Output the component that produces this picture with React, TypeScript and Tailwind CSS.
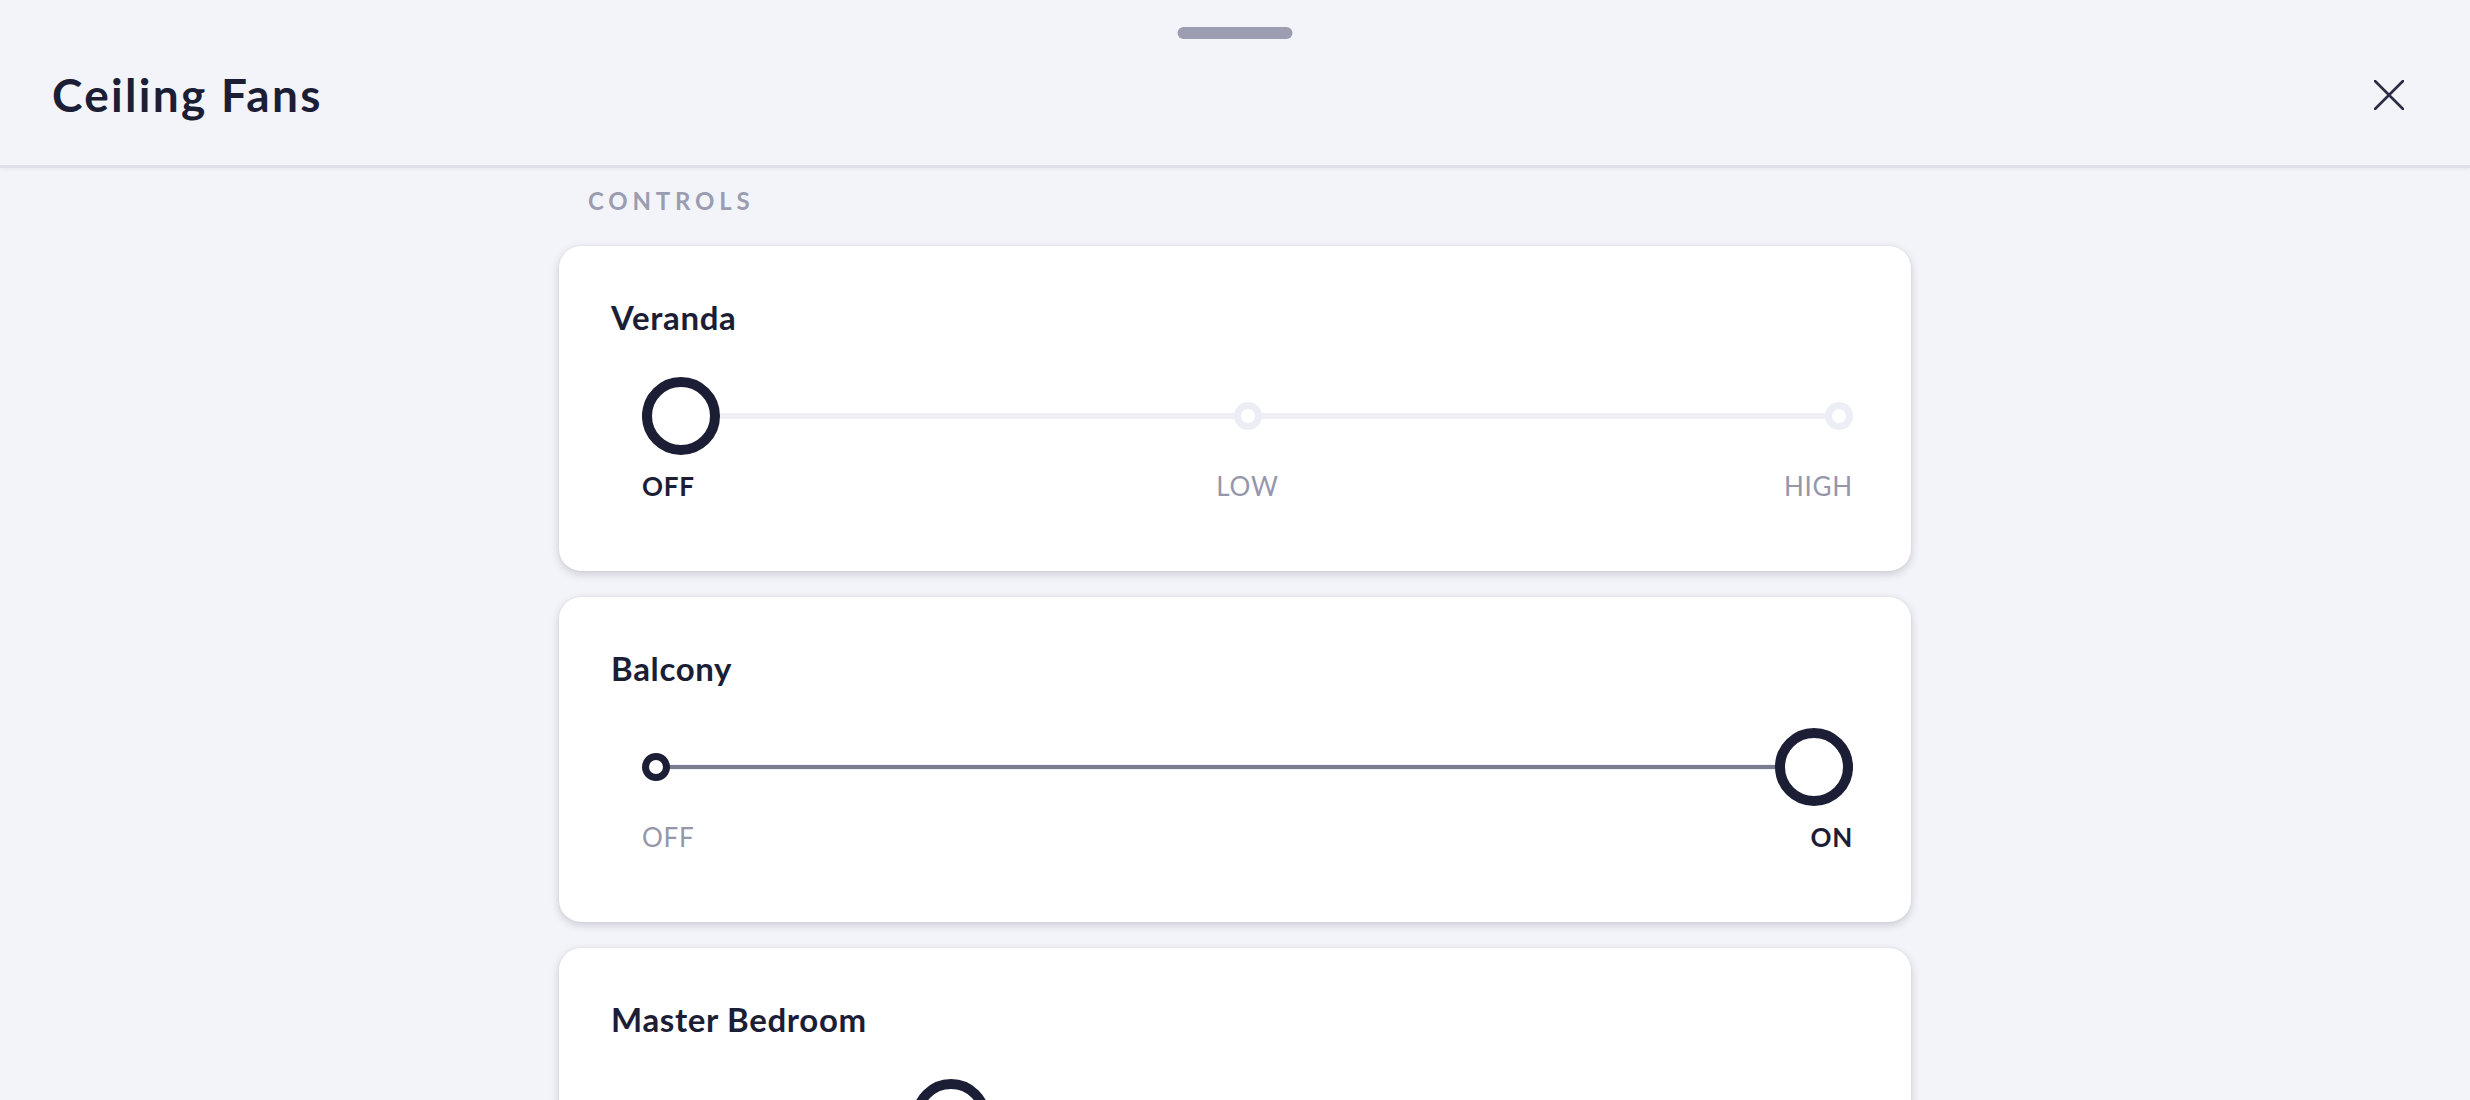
import React from "react";

type Fan = { name: string; stops: string[]; value: number; pos?: number };

const fans: Fan[] = [
  { name: "Veranda", stops: ["OFF", "LOW", "HIGH"], value: 0 },
  { name: "Balcony", stops: ["OFF", "ON"], value: 1 },
  { name: "Master Bedroom", stops: ["OFF", "LOW", "MED", "HIGH", "MAX"], value: 1, pos: 0.238 },
];

function StepSlider({ stops, value, pos }: { stops: string[]; value: number; pos?: number }) {
  const n = stops.length;
  const frac = pos ?? value / (n - 1);
  return (
    <div className="ml-[31px] mr-[6px]">
      <div className="relative flex h-[78px] items-center justify-between">
        {/* inactive track */}
        <div className="absolute left-[13px] right-[13px] top-1/2 h-[6px] -translate-y-1/2 rounded-full bg-[#eff0f5]" />
        {/* active track */}
        <div
          className="absolute left-[13px] top-1/2 h-[4px] -translate-y-1/2 bg-[#7a7c90]"
          style={{ width: `calc((100% - 78px) * ${frac} + 26px)` }}
        />
        {stops.map((s, i) => (
          <div
            key={s}
            className={
              "relative h-[28px] w-[28px] rounded-full border-[7px] bg-white " +
              (i <= value ? "border-[#1c1e36]" : "border-[#eceef5]")
            }
          />
        ))}
        <div
          className="absolute top-0 h-[78px] w-[78px] -translate-x-1/2 rounded-full border-[10px] border-[#1c1e36] bg-white"
          style={{ left: `calc(39px + (100% - 78px) * ${frac})` }}
        />
      </div>
      <div
        className={
          "mt-[16px] grid text-[26px] leading-[30px] tracking-[0.03em] " +
          (n === 2 ? "grid-cols-2" : n === 3 ? "grid-cols-3" : "grid-cols-5")
        }
      >
        {stops.map((s, i) => (
          <div
            key={s}
            className={
              (i === 0 ? "text-left " : i === n - 1 ? "text-right " : "text-center ") +
              (i === value ? "font-bold text-[#1c1e36]" : "font-normal text-[#9596ab]")
            }
          >
            {s}
          </div>
        ))}
      </div>
    </div>
  );
}

function FanCard({ fan }: { fan: Fan }) {
  return (
    <div className="rounded-[22px] bg-white pl-[52px] pr-[52px] pt-[51px] pb-[70px] shadow-[0_3px_8px_rgba(30,32,60,0.19),0_0_2px_rgba(30,32,60,0.08)]">
      <div className="text-[33px] font-bold leading-[40px] tracking-[0.02em] text-[#1c1e36]">{fan.name}</div>
      <div className="mt-[40px]">
        <StepSlider stops={fan.stops} value={fan.value} pos={fan.pos} />
      </div>
    </div>
  );
}

export default function App() {
  return (
    <div
      className="h-[1100px] overflow-hidden bg-[#f3f4f9]"
      style={{ fontFamily: "Lato, 'Noto Sans', sans-serif" }}
    >
      <header className="relative flex h-[168px] items-center justify-between border-b-[3px] border-[#e0e1e8] pl-[52px] pr-[66px] pt-[24px] shadow-[0_2px_3px_rgba(30,32,60,0.04)]">
        <div className="absolute left-1/2 top-[27px] h-[12px] w-[115px] -translate-x-1/2 rounded-full bg-[#9c9db0]" />
        <h1 className="text-[46px] font-bold leading-[52px] tracking-[0.05em] text-[#1c1e36]">Ceiling Fans</h1>
        <button className="flex h-[30px] w-[30px] items-center justify-center">
          <svg width="30" height="30" viewBox="0 0 30 30" fill="none">
            <path d="M1 1L29 29M29 1L1 29" stroke="#2a2c44" strokeWidth="2.6" strokeLinecap="round" />
          </svg>
        </button>
      </header>
      <main className="mx-auto w-[1352px]">
        <div className="pl-[29px] pt-[18px] text-[24px] font-bold leading-[30px] tracking-[0.2em] text-[#9a9cb0]">
          CONTROLS
        </div>
        <div className="mt-[30px] flex flex-col gap-[26px]">
          {fans.map((f) => (
            <FanCard key={f.name} fan={f} />
          ))}
        </div>
      </main>
    </div>
  );
}
